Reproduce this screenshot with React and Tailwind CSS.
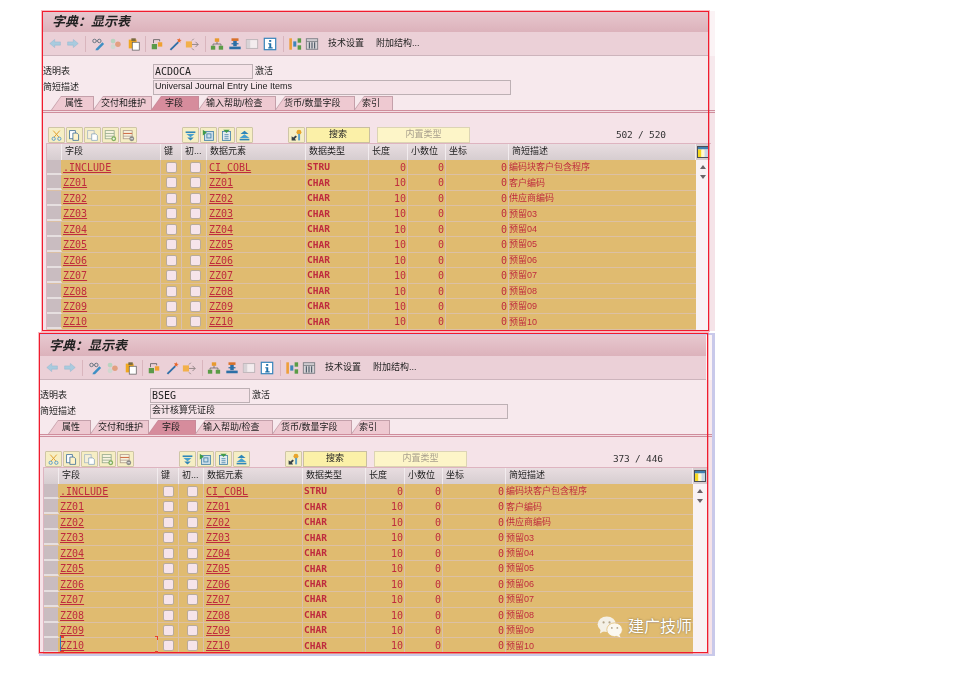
import React from 'react';

const cjk = "font-['Liberation_Sans','Noto_Sans_CJK_SC',sans-serif]";
const mono = "font-['DejaVu_Sans_Mono','Noto_Sans_CJK_SC',monospace]";
const cols = 'grid grid-cols-[15px_99px_21px_25px_99px_63px_39px_38px_63px_187px]';

// toolbar icons, all drawn on a 16 box
const icons = {
  back: <path d="M1 8l6-5v3h7v4H7v3z" fill="#a9cbdf" stroke="#8fb6cf" strokeWidth="0.6" />,
  forward: <path d="M15 8L9 3v3H2v4h7v3z" fill="#a9cbdf" stroke="#8fb6cf" strokeWidth="0.6" />,
  glasses: (
    <g>
      <circle cx="4" cy="4.5" r="2" fill="none" stroke="#5b6c78" strokeWidth="1" />
      <circle cx="9.5" cy="4.5" r="2" fill="none" stroke="#5b6c78" strokeWidth="1" />
      <path d="M6 4.5h1.5" stroke="#5b6c78" />
      <path d="M6 13l7-7 2 2-7 7H5z" fill="#3f8fc4" />
    </g>
  ),
  circles: (
    <g>
      <circle cx="5" cy="5" r="3" fill="#b8d4c0" />
      <circle cx="5" cy="12" r="3" fill="#cfd8d0" />
      <circle cx="11" cy="9" r="3.4" fill="#e2a080" />
    </g>
  ),
  clipboard: (
    <g>
      <rect x="2" y="3" width="9" height="10" fill="#f0a820" />
      <rect x="5" y="1.5" width="5" height="3" fill="#7a6a40" />
      <rect x="6" y="6" width="8" height="9" fill="#fff" stroke="#555" strokeWidth="0.8" />
    </g>
  ),
  swap: (
    <g>
      <rect x="2" y="8" width="6" height="6" fill="#5b9a4a" />
      <rect x="9" y="6" width="5" height="5" fill="#f0a030" />
      <path d="M4 7V3h7v2" fill="none" stroke="#555" strokeWidth="0.9" />
    </g>
  ),
  wand: (
    <g>
      <path d="M2 14L11 5l1.5 1.5L3.5 15.5z" fill="#2f6fa8" />
      <path d="M13 1l.7 2 2 .5-1.7 1.2.2 2-1.5-1.3-1.9.7.7-1.9-1.2-1.6 2 .1z" fill="#e8662a" />
    </g>
  ),
  transport: (
    <g>
      <rect x="1" y="5" width="7" height="7" fill="#f2b04a" />
      <path d="M8 8.5h7M12 5.5l3 3-3 3M8 4l2-2M8 13l2 2" fill="none" stroke="#8a7f7f" strokeWidth="1" />
    </g>
  ),
  hierarchy: (
    <g>
      <rect x="5.5" y="1.5" width="5" height="4" fill="#e89a2e" />
      <path d="M8 5.5V8M3.5 10V8h9v2" fill="none" stroke="#666" strokeWidth="0.9" />
      <rect x="1" y="10" width="5" height="4.5" fill="#5a9c46" />
      <rect x="10" y="10" width="5" height="4.5" fill="#5a9c46" />
    </g>
  ),
  stack: (
    <g>
      <rect x="4" y="1.5" width="8" height="3" fill="#d8702a" />
      <rect x="6" y="4.5" width="4" height="6" fill="#2b6fa6" />
      <rect x="4" y="7" width="8" height="1.4" fill="#2b6fa6" />
      <rect x="1.5" y="11" width="13" height="3" fill="#2b6fa6" />
    </g>
  ),
  window: (
    <g>
      <rect x="1.5" y="3" width="13" height="10" fill="#f3ecee" stroke="#b8b0b4" />
      <rect x="2" y="3.5" width="4" height="9" fill="#d8d2d6" />
    </g>
  ),
  info: (
    <g>
      <rect x="1.5" y="1.5" width="13" height="13" fill="#fff" stroke="#3a86bd" strokeWidth="1.4" />
      <rect x="7" y="3.5" width="2.4" height="2" fill="#1f6fa8" />
      <path d="M6 7h3.4v4.6H11V13H6v-1.4h1.2V8.4H6z" fill="#1f6fa8" />
    </g>
  ),
  tree: (
    <g>
      <rect x="1.5" y="1.5" width="3" height="13" fill="#ee9f3a" />
      <rect x="6" y="5" width="3.5" height="6" fill="#3f86bb" />
      <rect x="11" y="1.5" width="4" height="5" fill="#5a9c46" />
      <rect x="11" y="9.5" width="4" height="5" fill="#5a9c46" />
    </g>
  ),
  columns: (
    <g>
      <rect x="1.5" y="2" width="13" height="12" fill="#d8d4d8" stroke="#75787e" />
      <path d="M1.5 5h13" stroke="#75787e" />
      <path d="M5 6v7M8 6v7M11 6v7" stroke="#4c5a66" strokeWidth="1.3" />
    </g>
  ),
  cut: (
    <g>
      <path d="M4 2l7 8M12 2L5 10" stroke="#e0a030" strokeWidth="1.2" />
      <circle cx="4.5" cy="12" r="2" fill="none" stroke="#5d9ccc" strokeWidth="1.2" />
      <circle cx="11.5" cy="12" r="2" fill="none" stroke="#5d9ccc" strokeWidth="1.2" />
    </g>
  ),
  copy: (
    <g>
      <rect x="2" y="2" width="7" height="10" fill="#fff" stroke="#3f6f99" />
      <path d="M6 5h5l2 2v7H6z" fill="#fff3c8" stroke="#3f6f99" />
    </g>
  ),
  paste: (
    <g>
      <rect x="2" y="2" width="8" height="10" fill="#f7f0d8" stroke="#a9b8c4" />
      <path d="M7 6h5l2 2v6H7z" fill="#fff" stroke="#8ca8bc" />
    </g>
  ),
  addRow: (
    <g>
      <rect x="1.5" y="2" width="11" height="10" fill="#f8f4e0" stroke="#94a88a" />
      <path d="M1.5 5.5h11M1.5 8.8h11" stroke="#94a88a" />
      <circle cx="12" cy="12" r="3" fill="#7fae5c" />
      <path d="M10.4 12h3.2M12 10.4v3.2" stroke="#fff" />
    </g>
  ),
  delRow: (
    <g>
      <rect x="1.5" y="2" width="11" height="10" fill="#f8f4e0" stroke="#b09a8a" />
      <path d="M1.5 5.5h11" stroke="#d0704a" strokeWidth="1.4" />
      <path d="M1.5 8.8h11" stroke="#b09a8a" />
      <circle cx="12" cy="12" r="3" fill="#8a8a88" />
      <path d="M10.4 12h3.2" stroke="#fff" />
    </g>
  ),
  down: (
    <g>
      <path d="M2 3h12v2H2z" fill="#2f86b8" />
      <path d="M3 6h10l-5 4z" fill="#46a0cf" />
      <path d="M4 10.5h8l-4 3.5z" fill="#2f86b8" />
    </g>
  ),
  pageDown: (
    <g>
      <rect x="3" y="3" width="11" height="11" fill="#cfe0ea" stroke="#3f7fa8" />
      <rect x="6" y="6" width="5" height="5" fill="none" stroke="#3f7fa8" />
      <path d="M1 1l5 3.5L1 8z" fill="#3f9a48" />
    </g>
  ),
  pageUp: (
    <g>
      <rect x="3" y="3" width="10" height="11" fill="#e4ecef" stroke="#3f7fa8" />
      <path d="M5.5 7h5M5.5 9.5h5M5.5 12h5" stroke="#3f7fa8" />
      <path d="M4 1h8L8 5z" fill="#3f9a48" />
    </g>
  ),
  up: (
    <g>
      <path d="M8 2l5 4H3z" fill="#2f86b8" />
      <path d="M8 6.5l6 4.5H2z" fill="#46a0cf" />
      <path d="M2 12h12v2H2z" fill="#2f86b8" />
    </g>
  ),
  keyTool: (
    <g>
      <circle cx="11" cy="4" r="3" fill="#e8a52c" />
      <rect x="10" y="6" width="2.4" height="8" fill="#5aa0c8" />
      <path d="M2 14V9l2 1.5L7 8l1.5 1.5L6 12l1.5 2z" fill="#37424a" />
    </g>
  ),
};

const Icon = ({ name, size = 14, className = '' }) => (
  <svg viewBox="0 0 16 16" width={size} height={size} className={`shrink-0 ${className}`}>
    {icons[name]}
  </svg>
);

const Sep = () => <span className="w-px h-[16px] bg-[#d9b5bd] shrink-0" />;

const Toolbar = () => (
  <div className={`h-[24px] w-[667px] flex items-center pl-[7px] bg-[#ebd0d7] border-b border-[#cdb4bc] ${cjk} text-[9px] text-[#222]`}>
    <Icon name="back" size={13} />
    <Icon name="forward" size={13} className="ml-[4px]" />
    <span className="w-[6px]" />
    <Sep />
    <Icon name="glasses" className="ml-[5px]" />
    <Icon name="circles" size={13} className="ml-[4px]" />
    <Icon name="clipboard" className="ml-[5px]" />
    <span className="w-[4px]" />
    <Sep />
    <Icon name="swap" className="ml-[4px]" />
    <Icon name="wand" className="ml-[4px]" />
    <Icon name="transport" className="ml-[3px]" />
    <span className="w-[6px]" />
    <Sep />
    <Icon name="hierarchy" className="ml-[4px]" />
    <Icon name="stack" className="ml-[4px]" />
    <Icon name="window" className="ml-[3px]" />
    <Icon name="info" className="ml-[4px]" />
    <span className="w-[6px]" />
    <Sep />
    <Icon name="tree" className="ml-[4px]" />
    <Icon name="columns" className="ml-[3px]" />
    <span className="ml-[9px]">技术设置</span>
    <span className="ml-[12px]">附加结构...</span>
  </div>
);

const Field = ({ label, value, width, mono: isMono, after }) => (
  <div className="flex items-center h-[16px]">
    <span className="w-[111px] pl-px pt-px text-[9px] text-[#222]">{label}</span>
    <span
      className={`h-[15px] flex items-center pl-px bg-[#f5e3e8] border border-[#bdb0b4] ${isMono ? `${mono} text-[10px]` : 'text-[9px]'} text-[#222]`}
      style={{ width }}
    >
      {value}
    </span>
    {after && <span className="ml-[2px] pt-px text-[9px] text-[#222]">{after}</span>}
  </div>
);

const tabs = [
  { label: '属性', w: 'w-[43px]', pad: 'pl-[14px]' },
  { label: '交付和维护', w: 'w-[59px]', pad: 'pl-[8px]' },
  { label: '字段', w: 'w-[48px]', pad: 'pl-[14px]', active: true },
  { label: '输入帮助/检查', w: 'w-[78px]', pad: 'pl-[8px]' },
  { label: '货币/数量字段', w: 'w-[80px]', pad: 'pl-[9px]' },
  { label: '索引', w: 'w-[39px]', pad: 'pl-[8px]' },
];

const Tabs = () => (
  <div className="flex h-[14px] mt-px pl-[9px]">
    {tabs.map((t) => (
      <div
        key={t.label}
        className={`${t.w} h-[14px] -mr-px pt-px pr-px [clip-path:polygon(10px_0,100%_0,100%_100%,0_100%)] ${t.active ? 'bg-[#c98a9a]' : 'bg-[#c4a0aa]'}`}
      >
        <div
          className={`h-[13px] flex items-center ${t.pad} text-[9px] text-[#222] [clip-path:polygon(10px_0,100%_0,100%_100%,1px_100%)] ${t.active ? 'bg-[#d68c9c]' : 'bg-[#eec9d1]'}`}
        >
          {t.label}
        </div>
      </div>
    ))}
  </div>
);

const ToolBtn = ({ name, className = '' }) => (
  <span className={`w-[17px] h-[16px] flex items-center justify-center bg-[#f6eec4] border border-[#cfc6a6] rounded-[1px] ${className}`}>
    <Icon name={name} size={13} />
  </span>
);

const Actions = ({ count }) => (
  <div className={`flex items-center h-[16px] pl-[6px] ${cjk} text-[9px]`}>
    <ToolBtn name="cut" />
    <ToolBtn name="copy" className="ml-px" />
    <ToolBtn name="paste" className="ml-px" />
    <ToolBtn name="addRow" className="ml-px" />
    <ToolBtn name="delRow" className="ml-px" />
    <ToolBtn name="down" className="ml-[45px]" />
    <ToolBtn name="pageDown" className="ml-px" />
    <ToolBtn name="pageUp" className="ml-px" />
    <ToolBtn name="up" className="ml-px" />
    <ToolBtn name="keyTool" className="ml-[35px]" />
    <span className="w-[64px] h-[16px] ml-px flex items-center justify-center bg-[#fbf0a8] border border-[#c9bfa0] text-[#222]">搜索</span>
    <span className="w-[93px] h-[16px] ml-[7px] flex items-center justify-center bg-[#fdf5c8] border border-[#dcd4b4] text-[#a9a08e]">内置类型</span>
    <span className={`ml-[146px] ${mono} text-[9.5px] tracking-[-0.2px] text-[#333] whitespace-pre`}>{count}</span>
  </div>
);

const headers = ['', '字段', '键', '初...', '数据元素', '数据类型', '长度', '小数位', '坐标', '简短描述'];

const HeaderRow = () => (
  <div className={`${cols} h-[16px] bg-gradient-to-b from-[#e8dde0] to-[#d6cdd0] text-[9px] text-[#222]`}>
    {headers.map((h, i) => (
      <div key={i} className="pl-[3px] flex items-center border-r border-[#f2ecee] overflow-hidden whitespace-nowrap">
        {h}
      </div>
    ))}
  </div>
);

const Check = () => <span className="w-[11px] h-[11px] bg-[#f6e4ea] border border-[#b9ab9c] rounded-[2px]" />;

const Row = ({ name, type, len, desc }) => (
  <div className={`${cols} h-[15.45px] bg-[#e0bb70] text-[#bf2b3e] border-b border-[#dcc0a4]`}>
    <div className="bg-[#c9bcc0] border-b-2 border-[#e6dfe0] border-r border-r-[#e0bb70]" />
    <div className={`${mono} text-[10px] underline underline-offset-1 pl-px flex items-center border-r border-[#d9bfae]`}>{name}</div>
    <div className="flex items-center justify-center border-r border-[#d9bfae]"><Check /></div>
    <div className="flex items-center justify-center pl-[3px] border-r border-[#d9bfae]"><Check /></div>
    <div className={`${mono} text-[10px] underline underline-offset-1 pl-[2px] flex items-center border-r border-[#d9bfae]`}>{name === '.INCLUDE' ? 'CI_COBL' : name}</div>
    <div className={`${mono} text-[9.5px] font-bold pl-px flex items-center border-r border-[#d9bfae]`}>{type}</div>
    <div className={`${mono} text-[10px] flex items-center justify-end pr-px border-r border-[#d9bfae]`}>{len}</div>
    <div className={`${mono} text-[10px] flex items-center justify-end pr-px border-r border-[#d9bfae]`}>0</div>
    <div className={`${mono} text-[10px] flex items-center justify-end pr-px border-r border-[#d9bfae]`}>0</div>
    <div className="text-[9px] pt-px flex items-center whitespace-nowrap">{desc}</div>
  </div>
);

const rows = [
  { name: '.INCLUDE', type: 'STRU', len: '0', desc: '编码块客户包含程序' },
  { name: 'ZZ01', type: 'CHAR', len: '10', desc: '客户编码' },
  { name: 'ZZ02', type: 'CHAR', len: '10', desc: '供应商编码' },
  { name: 'ZZ03', type: 'CHAR', len: '10', desc: '预留03' },
  { name: 'ZZ04', type: 'CHAR', len: '10', desc: '预留04' },
  { name: 'ZZ05', type: 'CHAR', len: '10', desc: '预留05' },
  { name: 'ZZ06', type: 'CHAR', len: '10', desc: '预留06' },
  { name: 'ZZ07', type: 'CHAR', len: '10', desc: '预留07' },
  { name: 'ZZ08', type: 'CHAR', len: '10', desc: '预留08' },
  { name: 'ZZ09', type: 'CHAR', len: '10', desc: '预留09' },
  { name: 'ZZ10', type: 'CHAR', len: '10', desc: '预留10' },
];

const Scrollbar = () => (
  <div className="w-[14px] flex flex-col shrink-0">
    <div className="h-[16px] flex items-center justify-center bg-[#d6cdd0]">
      <svg viewBox="0 0 12 12" width="12" height="12">
        <rect x="0.5" y="0.5" width="11" height="11" fill="#fff" stroke="#4a4f55" />
        <rect x="1" y="1" width="10" height="2.5" fill="#3f7fb0" />
        <rect x="1" y="3.5" width="3.5" height="7.5" fill="#f6d820" />
        <rect x="4.5" y="3.5" width="3" height="7.5" fill="#fff8d0" />
        <rect x="7.5" y="3.5" width="3.5" height="7.5" fill="#c9d8e4" />
      </svg>
    </div>
    <div className="flex-1 bg-[#f8f2f4] flex flex-col items-center pt-[5px] gap-[6px]">
      <span className="w-0 h-0 border-x-[3px] border-x-transparent border-b-[4px] border-b-[#6a6266]" />
      <span className="w-0 h-0 border-x-[3px] border-x-transparent border-t-[4px] border-t-[#6a6266]" />
    </div>
  </div>
);

const Panel = ({ table, desc, count, height }) => (
  <div className={`w-[673px] overflow-hidden bg-[#fbf3f5] blur-[0.35px] ${cjk}`} style={{ height }}>
    <div className="h-[21px] w-[667px] flex items-center pl-[10px] bg-gradient-to-b from-[#e8c8cf] to-[#dcb2bb] text-[13px] font-bold italic text-[#222]">
      字典：显示表
    </div>
    <Toolbar />
    <div className="h-[54px] bg-[#f7e9ed] pt-[7px] flex flex-col">
      <Field label="透明表" value={table} width="100px" mono after="激活" />
      <Field label="简短描述" value={desc} width="358px" mono={false} />
      <Tabs />
    </div>
    <div className="h-[3px] bg-[#f3dde3] border-y border-[#cf8d9c]" />
    <div className="bg-[#f5e3e8] h-[218px] pt-[14px]">
      <Actions count={count} />
      <div className="ml-[4px] w-[665px] flex border-t border-l border-[#deb4c0]">
        <div className="w-[649px]">
          <HeaderRow />
          {rows.map((r) => (
            <Row key={r.name} {...r} />
          ))}
        </div>
        <Scrollbar />
      </div>
    </div>
  </div>
);

const Frame = ({ width }) => (
  <div
    className="absolute left-0 top-0 h-[320px] border border-[#f01c2e] shadow-[0_0_0_1px_rgba(240,28,46,0.3)] pointer-events-none"
    style={{ width }}
  />
);

export default function App() {
  return (
    <div className="w-[960px] h-[677px] bg-white overflow-hidden pt-[11px]">
      <div className="relative ml-[42px]">
        <Panel table="ACDOCA" desc="Universal Journal Entry Line Items" count="502 / 520" height={320} />
        <Frame width={667} />
      </div>
      <div className="relative ml-[39px] mt-[2px] w-[676px] bg-[#c9c9ea] pt-[2px] pb-[2px]">
        <Panel table="BSEG" desc="会计核算凭证段" count="373 / 446" height={319} />
        <Frame width={669} />
        {/* cursor on the last row */}
        <div className="absolute left-[21px] top-[303px] w-[98px] h-[17px]">
          <span className="absolute left-0 top-0 w-[4px] h-[2px] bg-[#e8402c]" />
          <span className="absolute left-0 top-0 w-px h-full bg-[#2f7fc0]" />
          <span className="absolute right-0 top-0 w-[3px] h-px bg-[#e8402c]" />
          <span className="absolute right-0 top-0 w-px h-[4px] bg-[#e8402c]" />
          <span className="absolute right-0 bottom-0 w-[3px] h-[2px] bg-[#e8402c]" />
          <span className="absolute left-0 bottom-0 w-[4px] h-[2px] bg-[#e8402c]" />
        </div>
        {/* watermark */}
        <div className="absolute left-[558px] top-[282px] flex items-center text-white">
          <svg viewBox="0 0 28 24" width="26" height="22" className="shrink-0">
            <ellipse cx="10.5" cy="9" rx="10" ry="8.5" fill="#f4f0e6" />
            <path d="M4 14l-1 5 5-3z" fill="#f4f0e6" />
            <ellipse cx="19" cy="15" rx="8.5" ry="7.5" fill="#fbf8f0" stroke="#e0bb70" strokeWidth="0.8" />
            <path d="M24 20l1.5 3.5-5-2z" fill="#fbf8f0" />
            <circle cx="7" cy="7" r="1.2" fill="#b3a58a" />
            <circle cx="13.5" cy="7" r="1.2" fill="#b3a58a" />
            <circle cx="16" cy="13" r="1" fill="#b3a58a" />
            <circle cx="22" cy="13" r="1" fill="#b3a58a" />
          </svg>
          <span className={`ml-[5px] text-[16px] whitespace-nowrap ${cjk} [text-shadow:0_0_2px_rgba(90,80,60,0.8)]`}>建广技师</span>
        </div>
      </div>
    </div>
  );
}
